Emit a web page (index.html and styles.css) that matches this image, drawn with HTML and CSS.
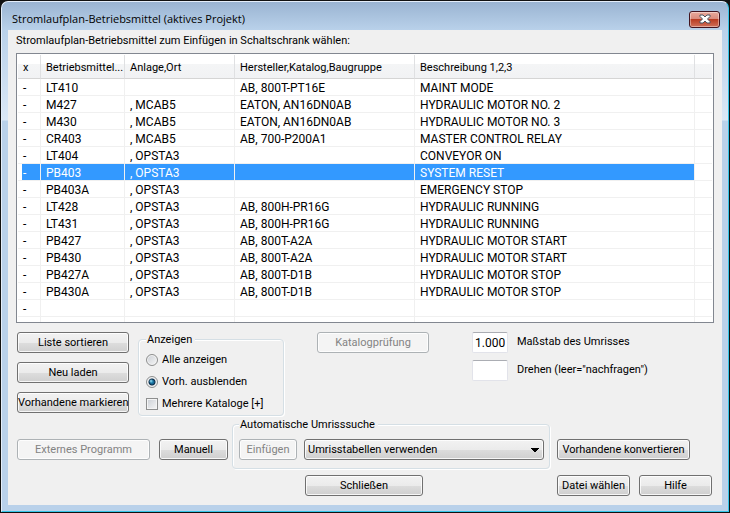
FILE: index.html
```
<!DOCTYPE html>
<html lang="de">
<head>
    <meta charset="UTF-8">
    <meta name="viewport" content="width=device-width, initial-scale=1.0">
    <title>Stromlaufplan-Betriebsmittel</title>
    <link rel="stylesheet" href="styles.css">
</head>

<body>
    <div class="window">
        <header class="titlebar">
            <h1>Stromlaufplan-Betriebsmittel (aktives Projekt)</h1>
            <button type="button" class="close" aria-label="Fenster schließen">
                <svg width="12" height="10" viewBox="0 0 12 10">
                    <path d="M1 1H4L6 3L8 1H11V2.5L8.5 5L11 7.5V9H8L6 7L4 9H1V7.5L3.500 5L1 2.500Z" fill="#fff" stroke="#4b5562" stroke-width="1"/>
                </svg>
            </button>
        </header>

        <main class="content">
            <p class="intro" id="intro">Stromlaufplan-Betriebsmittel zum Einfügen in Schaltschrank wählen:</p>

            <div class="list">
                <table aria-labelledby="intro">
                    <colgroup>
                        <col class="col-x">
                        <col class="col-tag">
                        <col class="col-loc">
                        <col class="col-mfg">
                        <col class="col-desc">
                        <col class="col-end">
                    </colgroup>
                    <thead>
                        <tr><th>x</th><th>Betriebsmittel...</th><th>Anlage,Ort</th><th>Hersteller,Katalog,Baugruppe</th><th>Beschreibung 1,2,3</th><th></th></tr>
                    </thead>
                    <tbody>
                        <tr><td>-</td><td>LT410</td><td></td><td>AB, 800T-PT16E</td><td>MAINT MODE</td><td></td></tr>
                        <tr><td>-</td><td>M427</td><td>, MCAB5</td><td>EATON, AN16DN0AB</td><td>HYDRAULIC MOTOR NO. 2</td><td></td></tr>
                        <tr><td>-</td><td>M430</td><td>, MCAB5</td><td>EATON, AN16DN0AB</td><td>HYDRAULIC MOTOR NO. 3</td><td></td></tr>
                        <tr><td>-</td><td>CR403</td><td>, MCAB5</td><td>AB, 700-P200A1</td><td>MASTER CONTROL RELAY</td><td></td></tr>
                        <tr><td>-</td><td>LT404</td><td>, OPSTA3</td><td></td><td>CONVEYOR ON</td><td></td></tr>
                        <tr class="selected"><td>-</td><td>PB403</td><td>, OPSTA3</td><td></td><td>SYSTEM RESET</td><td></td></tr>
                        <tr><td>-</td><td>PB403A</td><td>, OPSTA3</td><td></td><td>EMERGENCY STOP</td><td></td></tr>
                        <tr><td>-</td><td>LT428</td><td>, OPSTA3</td><td>AB, 800H-PR16G</td><td>HYDRAULIC RUNNING</td><td></td></tr>
                        <tr><td>-</td><td>LT431</td><td>, OPSTA3</td><td>AB, 800H-PR16G</td><td>HYDRAULIC RUNNING</td><td></td></tr>
                        <tr><td>-</td><td>PB427</td><td>, OPSTA3</td><td>AB, 800T-A2A</td><td>HYDRAULIC MOTOR START</td><td></td></tr>
                        <tr><td>-</td><td>PB430</td><td>, OPSTA3</td><td>AB, 800T-A2A</td><td>HYDRAULIC MOTOR START</td><td></td></tr>
                        <tr><td>-</td><td>PB427A</td><td>, OPSTA3</td><td>AB, 800T-D1B</td><td>HYDRAULIC MOTOR STOP</td><td></td></tr>
                        <tr><td>-</td><td>PB430A</td><td>, OPSTA3</td><td>AB, 800T-D1B</td><td>HYDRAULIC MOTOR STOP</td><td></td></tr>
                        <tr><td>-</td><td></td><td></td><td></td><td></td><td></td></tr>
                        <tr><td></td><td></td><td></td><td></td><td></td><td></td></tr>
                    </tbody>
                </table>
            </div>

            <div class="options">
                <div class="list-buttons">
                    <button type="button">Liste sortieren</button>
                    <button type="button">Neu laden</button>
                    <button type="button">Vorhandene markieren</button>
                </div>
                <fieldset class="show">
                    <legend>Anzeigen</legend>
                    <label><input type="radio" name="show">Alle anzeigen</label>
                    <label><input type="radio" name="show" checked>Vorh. ausblenden</label>
                    <label><input type="checkbox">Mehrere Kataloge [+]</label>
                </fieldset>
                <button type="button" class="check" disabled>Katalogprüfung</button>
                <div class="fields">
                    <input type="text" id="scale" value="1.000">
                    <label for="scale">Maßstab des Umrisses</label>
                    <input type="text" id="rotate">
                    <label for="rotate">Drehen (leer="nachfragen")</label>
                </div>
            </div>

            <div class="actions">
                <button type="button" class="wide" disabled>Externes Programm</button>
                <button type="button" class="manual">Manuell</button>
                <fieldset class="search">
                    <legend>Automatische Umrisssuche</legend>
                    <button type="button" disabled>Einfügen</button>
                    <select aria-label="Automatische Umrisssuche">
                        <option>Umrisstabellen verwenden</option>
                    </select>
                </fieldset>
                <button type="button" class="wide">Vorhandene konvertieren</button>
            </div>

            <footer class="bottom">
                <button type="button" class="dismiss">Schließen</button>
                <button type="button">Datei wählen</button>
                <button type="button">Hilfe</button>
            </footer>
        </main>
    </div>
</body>
</html>
```
FILE: styles.css
```
* {
    box-sizing: border-box;
}

body {
    margin: 0;
    min-height: 100vh;
    display: flex;
    background: #111;
    font-family: Roboto, "Liberation Sans", Arial, sans-serif;
    font-size: 11px;
    line-height: 15px;
    color: #000;
}

/* Window frame */
.window {
    flex: 1;
    display: flex;
    flex-direction: column;
    margin: 1px;
    padding: 0 6px 6px;
    border: 1px solid #e4eefa;
    border-right-color: #35c5e8;
    border-bottom-color: #35c5e8;
    border-radius: 7px 7px 0 0;
    background: linear-gradient(#9ab4d2 0, #b9d1ea 28px, #dbe8f6 118px, #b9d1ea 119px);
}

.titlebar {
    height: 28px;
    display: flex;
    justify-content: space-between;
    align-items: center;
    padding: 6px 2px 0 4px;
}

.titlebar h1 {
    margin: 0;
    padding-bottom: 2px;
    font-family: "Open Sans", "Noto Sans", sans-serif;
    font-size: 11px;
    font-weight: normal;
}

.content {
    flex: 1;
    padding: 3px 8px 0;
    background: #f0f0f0;
}

.intro {
    margin: 0 0 5px;
}

/* Component list */
.list {
    height: 270px;
    padding: 1px;
    overflow: hidden;
    border: 1px solid #828790;
    background: #fff;
}

.list table {
    width: 100%;
    table-layout: fixed;
    border-collapse: separate;
    border-spacing: 0;
}

.col-x { width: 23px; }
.col-tag { width: 84px; }
.col-loc { width: 110px; }
.col-mfg { width: 180px; }
.col-end { width: 17px; }

.list th {
    height: 24px;
    padding: 2px 0 0 5px;
    text-align: left;
    font-weight: normal;
    white-space: nowrap;
    border-right: 1px solid #dfe0e2;
    border-bottom: 1px solid #d5d5d5;
    background: linear-gradient(#fff 40%, #f4f5f6 41%, #f1f2f4);
}

.list td {
    height: 17px;
    padding: 2px 0 0 5px;
    font-size: 12px;
    line-height: 14px;
    white-space: nowrap;
    border-right: 1px solid #f0f0f0;
    border-bottom: 1px solid #f0f0f0;
}

.list th:last-child,
.list td:last-child {
    border-right: 0;
}

.list .selected td:not(:last-child) {
    color: #fff;
    background: #3399ff;
}

.list .selected td:first-child {
    background: linear-gradient(90deg, #fff 4px, #3399ff 4px);
}

/* Buttons */
button {
    height: 21px;
    padding: 0;
    font: inherit;
    color: #000;
    white-space: nowrap;
    border: 1px solid #707070;
    border-radius: 3px;
    background: linear-gradient(#f2f2f2, #ebebeb 50%, #dddddd 51%, #cfcfcf);
    box-shadow: inset 0 0 0 1px rgba(255, 255, 255, .8);
}

button:disabled {
    color: #838383;
    border-color: #adb2b5;
    background: #f4f4f4;
}

.close {
    width: 31px;
    height: 17px;
    display: flex;
    align-items: center;
    justify-content: center;
    border-color: #43141f;
    background: linear-gradient(#e9a99c, #d98a7b 48%, #b93c22 50%, #d0705a);
    box-shadow: inset 0 0 0 1px rgba(255, 255, 255, .4);
}

/* Group boxes */
fieldset {
    flex: none;
    min-width: 0;
    margin: 0;
    border: 1px solid #d5dfe5;
    border-radius: 4px;
    box-shadow: inset 1px 1px #fff, 1px 1px #fff;
}

legend {
    padding: 0 3px 0 1px;
    background: #f0f0f0;
}

.options {
    display: flex;
    align-items: flex-start;
    padding: 9px 0 0 1px;
}

.list-buttons {
    flex: none;
    width: 112px;
    display: grid;
    grid-template-columns: 100%;
    gap: 9px;
    margin-right: 9px;
}

.show {
    width: 146px;
    height: 84px;
    display: flex;
    flex-direction: column;
    gap: 7px;
    margin-right: 33px;
    padding: 5px 7px 0;
}

.show label {
    display: flex;
    align-items: center;
    gap: 4px;
    white-space: nowrap;
}

.show input {
    flex: none;
    appearance: none;
    width: 12px;
    height: 12px;
    margin: 0;
    border: 1px solid #8e8f8f;
    background: linear-gradient(135deg, #cbcfd5, #f6f6f6);
    box-shadow: inset 0 0 0 1px #f4f4f4;
}

.show input[type="radio"] {
    border-radius: 50%;
}

.show input[type="radio"]:checked {
    background:
        radial-gradient(circle at 4px 4px, #9be6fb 0, transparent 2px),
        radial-gradient(circle at 5px 5px, #1f8fc0 0, #17628c 2px, #0c2c48 3px, #e4e7ea 4px);
}

.check {
    flex: none;
    width: 112px;
    margin-right: 43px;
}

.fields {
    display: grid;
    grid-template-columns: 36px auto;
    gap: 7px 9px;
}

.fields input {
    width: 36px;
    height: 21px;
    padding: 0 2px;
    font: inherit;
    font-size: 12px;
    border: 1px solid #e2e3ea;
    border-top-color: #abadb3;
    border-radius: 2px;
    background: #fff;
}

.fields label {
    padding-top: 2px;
}

/* Lower rows */
.actions {
    display: flex;
    align-items: flex-start;
    margin-top: 1px;
    padding-left: 1px;
}

.actions > button {
    flex: none;
    margin-top: 22px;
}

.wide {
    width: 133px;
}

.manual {
    width: 69px;
    margin: 0 4px 0 9px;
}

.search {
    width: 318px;
    height: 52px;
    display: flex;
    gap: 7px;
    margin-right: 7px;
    padding: 7px 5px 0 6px;
}

.search button {
    width: 58px;
}

.search select {
    appearance: none;
    width: 240px;
    height: 21px;
    padding: 0 3px;
    font: inherit;
    color: #000;
    border: 1px solid #707070;
    border-radius: 3px;
    background:
        linear-gradient(to bottom left, #000 50%, transparent 51%) right 8px top 8px / 4px 4px no-repeat,
        linear-gradient(to bottom right, #000 50%, transparent 51%) right 4px top 8px / 4px 4px no-repeat,
        linear-gradient(#f2f2f2, #ebebeb 50%, #dddddd 51%, #cfcfcf);
    box-shadow: inset 0 0 0 1px rgba(255, 255, 255, .8);
}

.bottom {
    display: flex;
    gap: 9px;
    padding: 6px 0 9px 289px;
}

.bottom button {
    width: 73px;
}

.bottom .dismiss {
    width: 118px;
    margin-right: 125px;
}
```
